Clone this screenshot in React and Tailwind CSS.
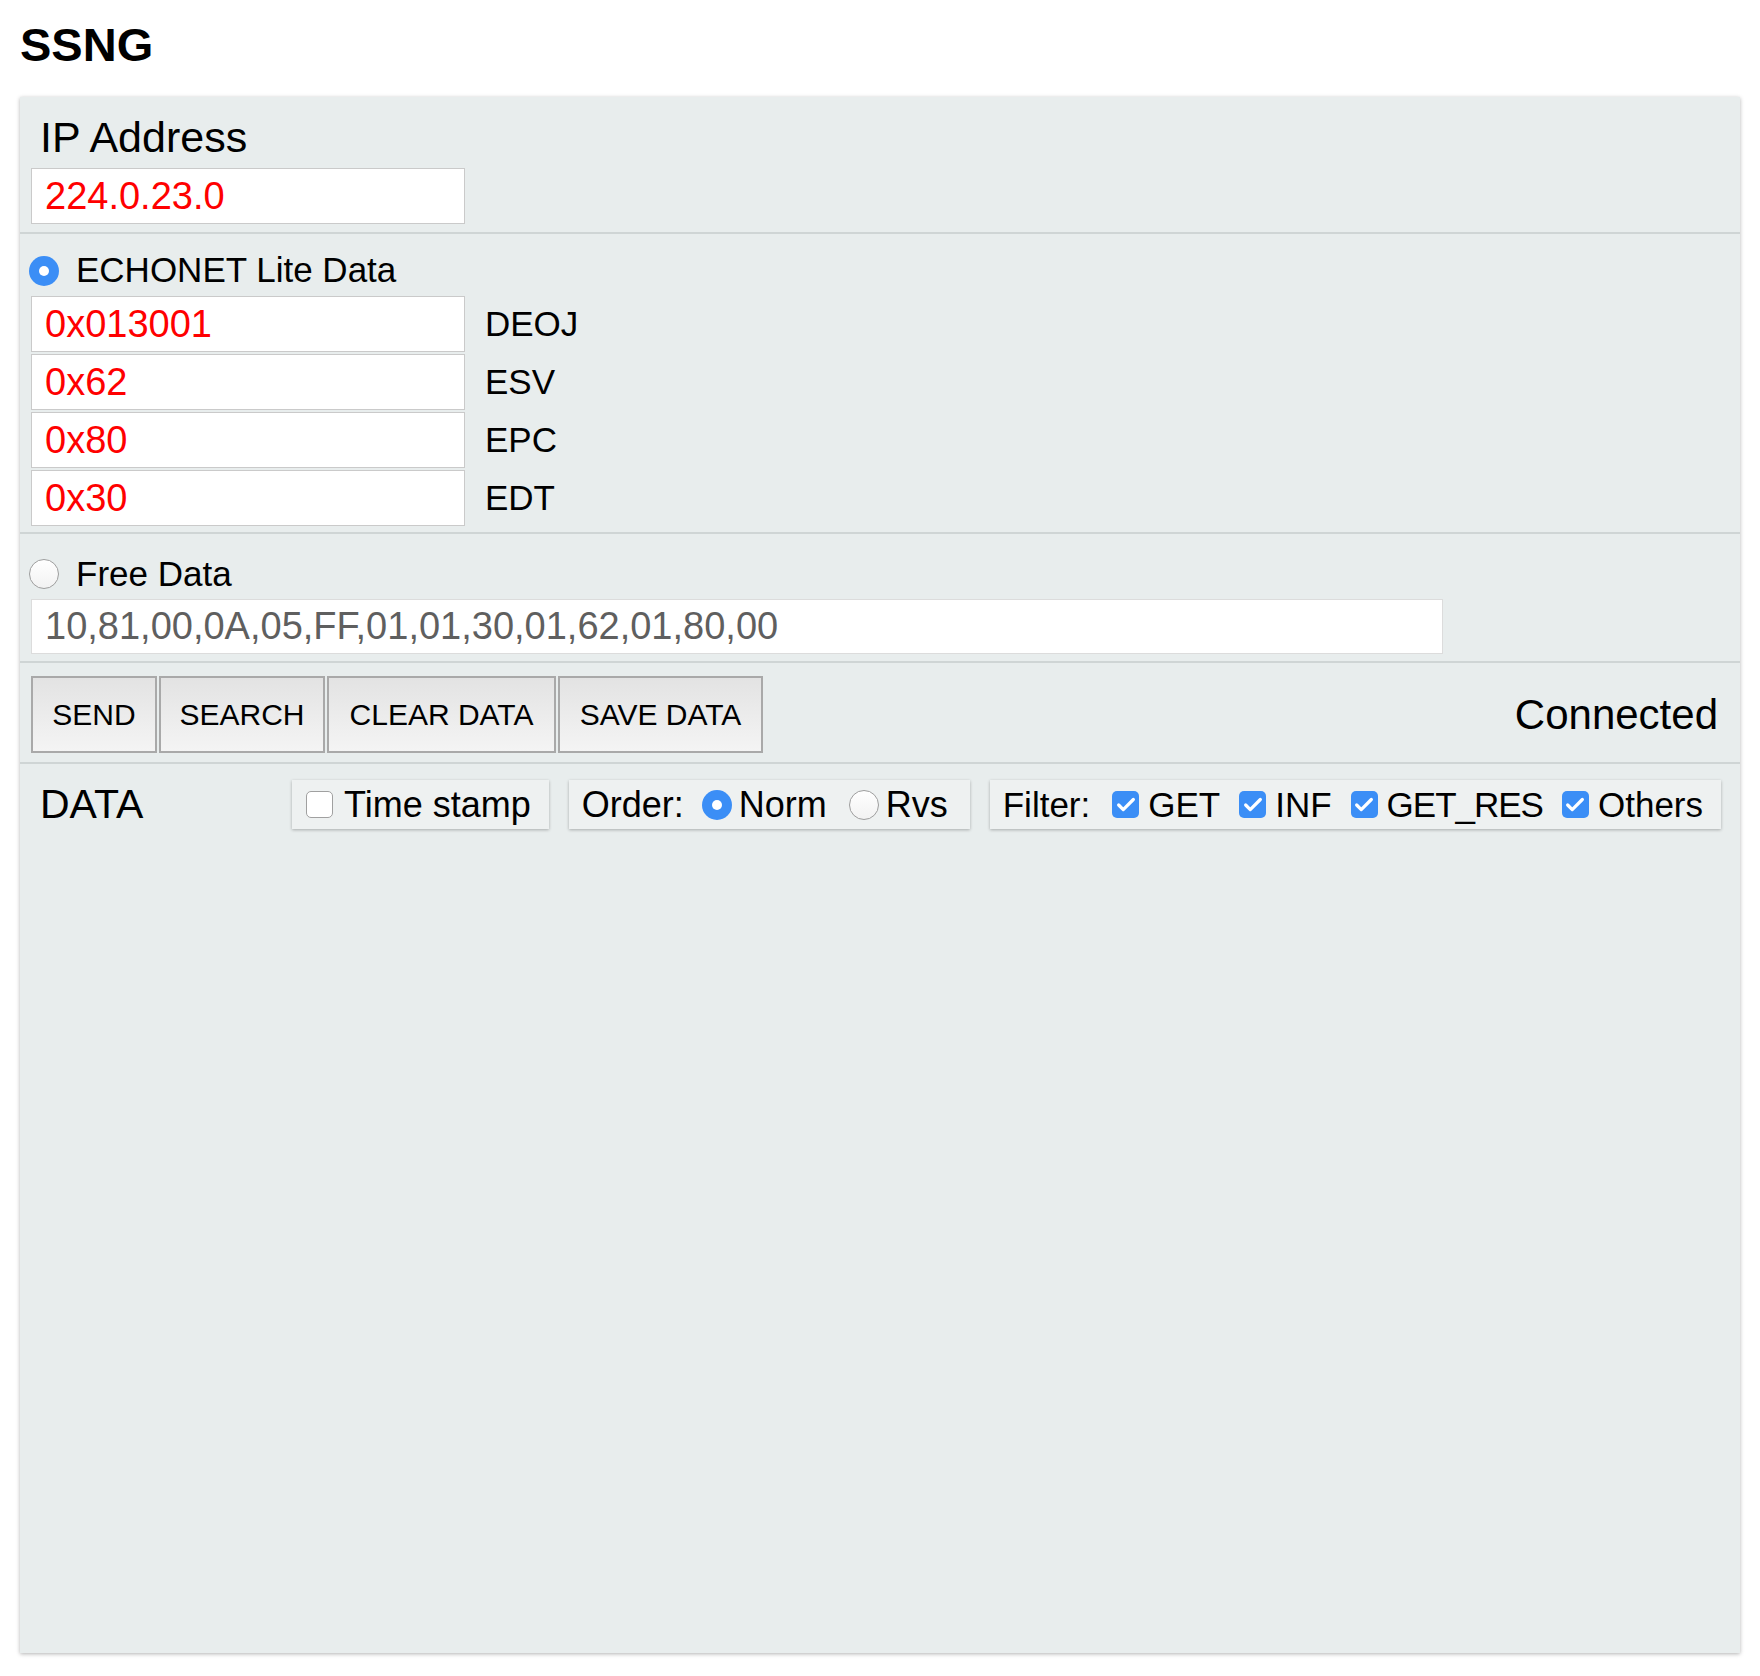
import { Check } from 'lucide-react';

const fields = [
  ['0x013001', 'DEOJ'],
  ['0x62', 'ESV'],
  ['0x80', 'EPC'],
  ['0x30', 'EDT'],
];

const Radio = ({ checked }) =>
  checked ? (
    <span className="flex h-[30px] w-[30px] shrink-0 items-center justify-center rounded-full bg-[#3b8ef6]">
      <span className="block h-[10px] w-[10px] rounded-full bg-white" />
    </span>
  ) : (
    <span className="block h-[30px] w-[30px] shrink-0 rounded-full border-[1.5px] border-[#9e9e9e] bg-linear-to-b from-white to-[#f2f2f2]" />
  );

const Checkbox = ({ checked }) =>
  checked ? (
    <span className="flex h-[27px] w-[27px] shrink-0 items-center justify-center rounded-[5px] bg-[#3b8ef6]">
      <Check size={22} strokeWidth={3.5} className="text-white" />
    </span>
  ) : (
    <span className="block h-[27px] w-[27px] shrink-0 rounded-[5px] border-[1.5px] border-[#a0a0a0] bg-white" />
  );

const Box = ({ children, className }) => (
  <div
    className={`flex h-[49px] items-center bg-[#eef1f1] shadow-[0_1px_3px_rgba(0,0,0,0.28)] ${className}`}
  >
    {children}
  </div>
);

const Button = ({ label, width }) => (
  <button
    className={`h-[77px] ${width} border-2 border-[#a9a9a9] bg-linear-to-b from-[#e3e3e3] to-[#f4f4f4] text-center text-[30px]`}
  >
    {label}
  </button>
);

export default function App() {
  return (
    <div className="min-h-[1676px] bg-white font-['Liberation_Sans',Arial,sans-serif] text-black">
      <h1 className="h-[97px] px-[20px] pt-[17px] text-[47px] font-bold leading-[56px]">SSNG</h1>

      <div className="mx-[20px] flex h-[1556px] flex-col bg-[#e8eded] shadow-[0_1px_4px_rgba(0,0,0,0.3)]">
        {/* ip address */}
        <section className="border-b-2 border-[#cfd5d5] px-[11px] pt-[17px] pb-[8px]">
          <div className="ml-[9px] text-[43px] leading-[47px]">IP Address</div>
          <input
            defaultValue="224.0.23.0"
            className="mt-[7px] block h-[56px] w-[434px] border border-[#cacaca] bg-white pl-[13px] text-[38px] text-[#ff0000] outline-none"
          />
        </section>

        {/* echonet lite data */}
        <section className="border-b-2 border-[#cfd5d5] px-[11px] pt-[11px] pb-[6px]">
          <div className="flex h-[51px] items-center gap-[17px]">
            <span className="-ml-[2px]">
              <Radio checked />
            </span>
            <span className="text-[35px]">ECHONET Lite Data</span>
          </div>
          <div className="flex flex-col gap-[2px]">
            {fields.map(([value, name]) => (
              <div key={name} className="flex items-center">
                <input
                  defaultValue={value}
                  className="block h-[56px] w-[434px] border border-[#cacaca] bg-white pl-[13px] text-[38px] text-[#ff0000] outline-none"
                />
                <span className="ml-[20px] text-[35px]">{name}</span>
              </div>
            ))}
          </div>
        </section>

        {/* free data */}
        <section className="border-b-2 border-[#cfd5d5] px-[11px] pt-[15px] pb-[7px]">
          <div className="flex h-[50px] items-center gap-[17px]">
            <span className="-ml-[2px]">
              <Radio />
            </span>
            <span className="text-[35px]">Free Data</span>
          </div>
          <input
            defaultValue="10,81,00,0A,05,FF,01,01,30,01,62,01,80,00"
            className="block h-[55px] w-[1412px] border border-[#dcdcdc] bg-white pl-[13px] text-[38px] text-[#5f5f5f] outline-none"
          />
        </section>

        {/* actions */}
        <section className="flex items-center justify-between border-b-2 border-[#cfd5d5] pt-[13px] pr-[22px] pb-[9px] pl-[11px]">
          <div className="flex gap-[2px]">
            <Button label="SEND" width="w-[126px]" />
            <Button label="SEARCH" width="w-[166px]" />
            <Button label="CLEAR DATA" width="w-[229px]" />
            <Button label="SAVE DATA" width="w-[205px]" />
          </div>
          <span className="text-[42px]">Connected</span>
        </section>

        {/* data log */}
        <section className="flex-1 pt-[10px] pl-[20px]">
          <div className="flex items-center text-[36px]">
            <span className="w-[252px] text-[41px]">DATA</span>
            <Box className="gap-[11px] pr-[18px] pl-[14px]">
              <Checkbox />
              <span>Time stamp</span>
            </Box>
            <Box className="ml-[20px] pr-[22px] pl-[13px]">
              <span>Order:</span>
              <span className="ml-[18px]">
                <Radio checked />
              </span>
              <span className="ml-[7px]">Norm</span>
              <span className="ml-[22px]">
                <Radio />
              </span>
              <span className="ml-[7px]">Rvs</span>
            </Box>
            <Box className="ml-[20px] pr-[18px] pl-[13px] text-[35px]">
              <span>Filter:</span>
              {['GET', 'INF', 'GET_RES', 'Others'].map((f, i) => (
                <span key={f} className={`flex items-center gap-[9px] ${i === 0 ? 'ml-[22px]' : 'ml-[19px]'}`}>
                  <Checkbox checked />
                  <span className={f === 'GET_RES' ? 'tracking-[-1px]' : ''}>{f}</span>
                </span>
              ))}
            </Box>
          </div>
        </section>
      </div>
    </div>
  );
}
